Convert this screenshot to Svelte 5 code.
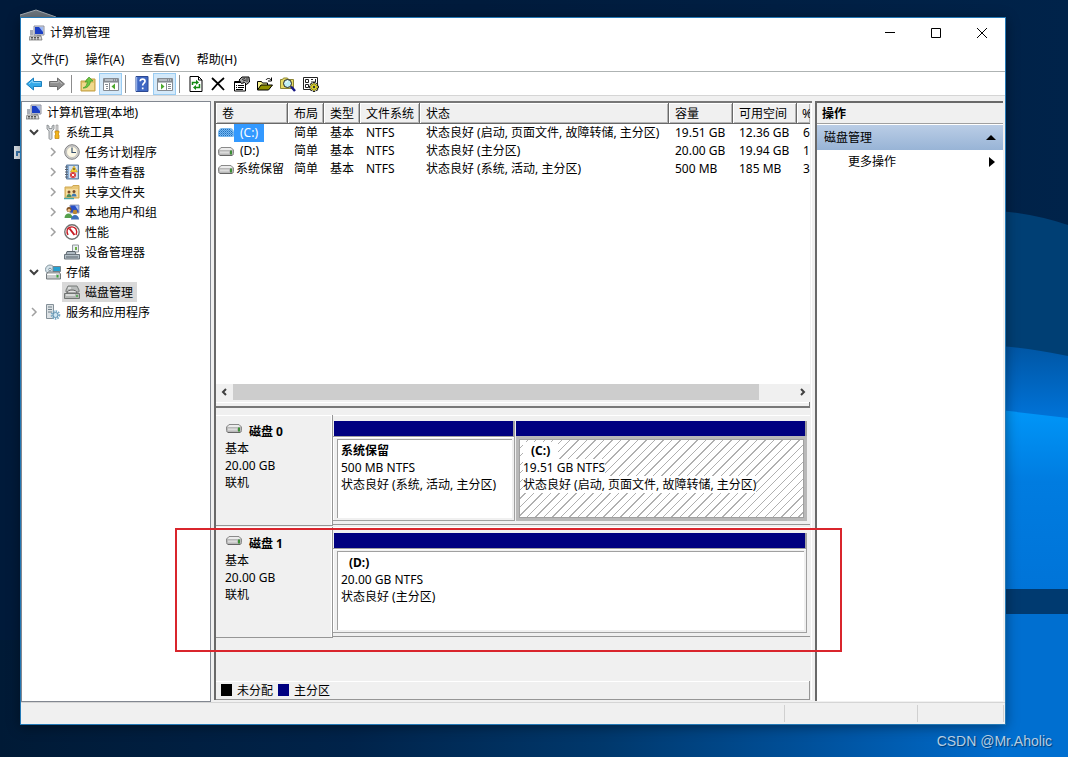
<script>
	const menus = ['文件(F)', '操作(A)', '查看(V)', '帮助(H)'];

	const tools = [
		{ icon: 'back', label: '后退' },
		{ icon: 'forward', label: '前进' },
		{ separator: true },
		{ icon: 'up', label: '上一级' },
		{ icon: 'treePane', label: '显示/隐藏控制台树', pressed: true },
		{ separator: true },
		{ icon: 'help', label: '帮助' },
		{ icon: 'actionPane', label: '显示/隐藏操作窗格', pressed: true },
		{ separator: true },
		{ icon: 'refresh', label: '刷新' },
		{ icon: 'delete', label: '删除' },
		{ icon: 'properties', label: '属性' },
		{ icon: 'open', label: '打开' },
		{ icon: 'explore', label: '浏览' },
		{ icon: 'settings', label: '设置' }
	];

	const tree = [
		{
			label: '系统工具',
			icon: 'tools',
			open: true,
			children: [
				{ label: '任务计划程序', icon: 'clock', more: true },
				{ label: '事件查看器', icon: 'events', more: true },
				{ label: '共享文件夹', icon: 'shared', more: true },
				{ label: '本地用户和组', icon: 'users', more: true },
				{ label: '性能', icon: 'performance', more: true },
				{ label: '设备管理器', icon: 'devices' }
			]
		},
		{
			label: '存储',
			icon: 'storage',
			open: true,
			children: [{ label: '磁盘管理', icon: 'disks' }]
		},
		{ label: '服务和应用程序', icon: 'services', more: true }
	];

	const columns = [
		{ label: '卷', size: 'wide' },
		{ label: '布局', size: 'narrow' },
		{ label: '类型', size: 'narrow' },
		{ label: '文件系统', size: 'medium' },
		{ label: '状态', size: 'auto' },
		{ label: '容量', size: 'amount' },
		{ label: '可用空间', size: 'amount' },
		{ label: '%', size: 'percent' }
	];

	const volumes = [
		{
			name: '(C:)',
			drive: true,
			cells: ['简单', '基本', 'NTFS', '状态良好 (启动, 页面文件, 故障转储, 主分区)', '19.51 GB', '12.36 GB', '6']
		},
		{
			name: '(D:)',
			drive: true,
			cells: ['简单', '基本', 'NTFS', '状态良好 (主分区)', '20.00 GB', '19.94 GB', '1']
		},
		{
			name: '系统保留',
			cells: ['简单', '基本', 'NTFS', '状态良好 (系统, 活动, 主分区)', '500 MB', '185 MB', '3']
		}
	];

	const disks = [
		{
			name: '磁盘 0',
			size: '20.00 GB',
			partitions: [
				{ name: '系统保留', size: '500 MB NTFS', status: '状态良好 (系统, 活动, 主分区)', share: 182 },
				{
					name: '(C:)',
					drive: true,
					size: '19.51 GB NTFS',
					status: '状态良好 (启动, 页面文件, 故障转储, 主分区)',
					share: 291,
					hatched: true
				}
			]
		},
		{
			name: '磁盘 1',
			size: '20.00 GB',
			marked: true,
			partitions: [{ name: '(D:)', drive: true, size: '20.00 GB NTFS', status: '状态良好 (主分区)', share: 1 }]
		}
	];

	let selectedNode = $state('磁盘管理');
	let selectedVolume = $state('(C:)');
</script>

{#snippet icon(name)}
	<svg class="icon" viewBox="0 0 16 16" aria-hidden="true">
		{#if name === 'computer'}
			<path d="M5 1h10v9H5z" fill="#d7d9e0" stroke="#8c90a0" />
			<path d="M6 2h8v7H6z" fill="#1b3fc4" />
			<path d="M10 2h4v5z" fill="#9db9f4" />
			<path d="M8 10h4v2H8z" fill="#9a9ca6" />
			<path d="M1 5h3v5H1z" fill="#a9adb6" />
			<path d="M1 11h11l1 4H0z" fill="#d4d4d4" stroke="#666" stroke-width=".7" />
			<path d="M2 12.5h9M2 14h9" stroke="#555" stroke-dasharray="2 1" />
		{:else if name === 'back'}
			<path d="M.5 8 7.500 2v3.500h8v5h-8V14z" fill="#35a9e8" stroke="#1c7fbd" />
			<path d="M3 8 6.700 4.600v2h7.800" fill="none" stroke="#8fd6fa" />
		{:else if name === 'forward'}
			<path d="M15.5 8 8.500 2v3.500h-8v5h8V14z" fill="#8f8f8f" stroke="#6e6e6e" />
			<path d="M1.5 6.600h7.800v-2L13 8" fill="none" stroke="#bbb" />
		{:else if name === 'up'}
			<path d="M1 5h5l1-2h8v12H1z" fill="#e2c46c" stroke="#c4a044" />
			<path d="M2 7h12v7H2z" fill="#f0d98e" />
			<path d="M3 12c3-1 4-3 4.300-6.500L5 6l4-5 4 4-2.500.2C10 9.500 7 12.500 3 12z" fill="#6cc644" stroke="#3d9a27" stroke-width=".7" />
		{:else if name === 'treePane' || name === 'actionPane'}
			<path d="M.5 2.500h15v12H.5z" fill="#fff" stroke="#858b92" />
			<path d="M1 4.500h14" stroke="#858b92" stroke-width="3" />
			<path d="M2 4h8M11 4h1M13 4h1" stroke="#e8edf2" />
			<path d="M1 6.500h14" stroke="#b7bcc2" />
			{#if name === 'treePane'}
				<path d="M6.500 7v7" stroke="#858b92" />
				<path d="M2 8.500h3M3 10.500h2M3 12.500h2" stroke="#858b92" />
				<path d="M12 7.500v6l-3.500-3z" fill="#4aa82c" />
			{:else}
				<path d="M9.500 7v7" stroke="#858b92" />
				<path d="M11 8.500h3M11 10.500h3M11 12.500h3" stroke="#858b92" />
				<path d="M4 7.500v6l3.500-3z" fill="#4aa82c" />
			{/if}
		{:else if name === 'help'}
			<path d="M2 .5h12v15H2z" fill="#3f68c4" stroke="#2b4891" />
			<path d="M2.500 1v14" stroke="#93aee6" stroke-width="1.5" />
			<path d="M6.200 5.300C6.300 2.300 11 2.400 11 5.200c0 2-2.300 2-2.300 4.300M8.700 11.500v1.700" fill="none" stroke="#fff" stroke-width="1.7" />
		{:else if name === 'refresh'}
			<path d="M2 .5h8.500L14 4v11.500H2z" fill="#fff" stroke="#000" />
			<path d="M10.500.5V4H14" fill="none" stroke="#000" />
			<path d="M4.500 9V6.500H9M11.500 8v3.500H7" fill="none" stroke="#138a13" stroke-width="1.5" />
			<path d="M8 3.800v5l3-2.300zM8 9v5l-3-2.500z" fill="#138a13" />
		{:else if name === 'delete'}
			<path d="M1 2c4 3.500 8 7.500 12 12M13 2C8 6 4 10 1 14" fill="none" stroke="#000" stroke-width="1.8" />
		{:else if name === 'properties'}
			<path d="M.5 5.500h11v9.500H.5z" fill="#fff" stroke="#000" />
			<path d="M1 6h9" stroke="#000" stroke-width="2" />
			<path d="M2 9.500h1M4 9.500h6M2 11.500h1M4 11.500h6M2 13.500h7" stroke="#000" />
			<path d="m5 4 3-3h7l.5 5-3 2.500-2-2-3 1z" fill="#a4a4a4" stroke="#000" />
			<path d="m8 3.500 3-1M9 5l3-1M13 2v4" stroke="#333" />
		{:else if name === 'open'}
			<path d="M.5 14V5.500h4l1 1.500h5v2" fill="#f5f08a" stroke="#000" />
			<path d="M.5 14 4 9h11.500l-4 5z" fill="#909000" stroke="#000" />
			<path d="M9 4c1-2 4-2 5 0M14.500 1.500V5H11" fill="none" stroke="#000" />
		{:else if name === 'explore'}
			<path d="M.5 12.500v-9h2l1-1.500h4l1 1.500h5v9z" fill="#e6da62" stroke="#8b8433" />
			<circle cx="7.500" cy="7.500" r="4" fill="#bff0f5" stroke="#222" />
			<path d="m11 10.500 4 4.500" stroke="#161684" stroke-width="2.5" />
			<path d="M6 7c0-1 1-2 2-2" stroke="#fff" fill="none" />
		{:else if name === 'settings'}
			<path d="M.5 1.500h14v12H.5z" fill="#fff" stroke="#222" />
			<path d="M2.500 3.500h3v3h-3zM2.500 8.500h3v3h-3zM8 3.500h2M8 6h5M12.500 3v3" fill="none" stroke="#222" />
			<path d="M11 6v10M6 11h10M7.500 7.500l7 7M14.500 7.500l-7 7" stroke="#222" stroke-width="2.4" />
			<path d="M11 7v8M7 11h8M8.200 8.200l5.600 5.600M13.800 8.200l-5.600 5.600" stroke="#dfd62e" stroke-width="1.4" />
			<circle cx="11" cy="11" r="2.600" fill="#dfd62e" />
			<circle cx="11" cy="11" r="1.200" fill="#333" />
		{:else if name === 'tools'}
			<path d="M2 1v4l2 2v7c0 2 3 2 3 0V7l2-2V1L7 2v2.500H4V2z" fill="#d5d8da" stroke="#7d8386" stroke-width=".8" />
			<path d="M11 1h2v6h-2z" fill="#d8d8d8" stroke="#888" stroke-width=".6" />
			<path d="M10 7h4v2l-1 1 1 1v3.500h-4V11l1-1-1-1z" fill="#f2b51c" stroke="#bd7f0c" stroke-width=".7" />
		{:else if name === 'clock'}
			<circle cx="8" cy="8" r="7.300" fill="#d0d0d0" stroke="#808080" />
			<circle cx="8" cy="8" r="5.500" fill="#fdf8e4" stroke="#a7a7a7" stroke-width=".6" />
			<path d="M8 3.500v5h4" fill="none" stroke="#38516e" stroke-width="1.2" />
		{:else if name === 'events'}
			<path d="M2.500 1h12v14h-12z" fill="#8bafd4" stroke="#5f7d9f" />
			<path d="M5 2h8.500v12H5z" fill="#d3e2f2" />
			<path d="M1 3h3M1 5.500h3M1 8h3M1 10.500h3M1 13h3" stroke="#59616d" />
			<path d="m10 2 3.500 6h-7z" fill="#ffd731" stroke="#b88911" stroke-width=".5" />
			<path d="M10 4v2.200" stroke="#222" />
			<circle cx="9" cy="11" r="3" fill="#d83a3a" />
			<path d="m7.800 9.800 2.500 2.500m0-2.500-2.500 2.500" stroke="#fff" />
		{:else if name === 'shared'}
			<path d="M1 3h7l1-1.500h6V14H1z" fill="#e9c878" stroke="#d0a851" />
			<path d="M2 5h12v8H2z" fill="#f7dea0" />
			<circle cx="5" cy="8" r="1.500" fill="#7a4b27" />
			<circle cx="10" cy="7.500" r="1.500" fill="#7a4b27" />
			<path d="M2.500 13c0-4 5-4 5 0z" fill="#4c8d59" />
			<path d="M7.500 12.500c0-4 5-4 5 0z" fill="#3e79b4" />
			<path d="M0 14.500h10" stroke="#4aa6a6" stroke-width="1.5" />
		{:else if name === 'users'}
			<path d="M6 1h9v8H6z" fill="#274fc7" stroke="#9ba1b4" />
			<path d="M11 1.500h3.500V7z" fill="#a9c3f4" />
			<circle cx="5" cy="5.500" r="2.500" fill="#81501f" />
			<circle cx="5" cy="6.300" r="1.500" fill="#eec08e" />
			<circle cx="11" cy="8" r="2.300" fill="#b98832" />
			<path d="M.5 14c0-6 8-6 8 0z" fill="#56a04c" />
			<path d="M7 15.500c0-6 8-6 8 0z" fill="#3b6fb8" />
		{:else if name === 'performance'}
			<circle cx="8" cy="8" r="7.200" fill="#fff" stroke="#707070" stroke-width="1.4" />
			<path d="M4 11C0 3 9 1 12 5c1 2 1 4 0 6" fill="none" stroke="#c71c24" stroke-width="1.4" />
			<path d="m5.500 4.500 5 6.500" stroke="#c71c24" stroke-width="2" />
		{:else if name === 'devices'}
			<path d="M8.500 1h6v7h-6z" fill="#e8eef2" stroke="#90969b" />
			<path d="M12 3v3" stroke="#6fb044" stroke-width="2" />
			<path d="M3 7.500h8l1 3H2z" fill="#aeb9c2" stroke="#59636b" />
			<path d="M.5 10.500h15V15H.5z" fill="#b4c0c8" stroke="#6b757d" />
			<path d="M2 13h12" stroke="#59636b" />
		{:else if name === 'storage'}
			<circle cx="5" cy="5.500" r="4.500" fill="#d6e3e9" stroke="#8799a3" />
			<circle cx="5" cy="5.500" r="1.300" fill="#fff" stroke="#7b909c" />
			<path d="M8 2.500h7.500v5H8z" fill="#25a0d2" stroke="#78848b" />
			<path d="M1.500 10 3 8h11l1.500 2v5h-14z" fill="#c9cdce" stroke="#72797d" />
			<path d="M12.500 11v2.500" stroke="#3aa33a" stroke-width="2" />
			<path d="M2 10.500h9" stroke="#fff" />
		{:else if name === 'disks'}
			<path d="M2 6 4 2h9l2 4v2H2z" fill="#b9bcbb" stroke="#777b79" />
			<path d="M3 9C3 5 13 5 13 9z" fill="#e4e4e4" stroke="#606060" />
			<path d="M.5 9.500h15v5H.5z" fill="#b4b7b5" stroke="#707472" />
			<path d="M2 11h9M4 4h3" stroke="#fff" />
			<path d="M13 11v2" stroke="#46a646" stroke-width="1.5" />
		{:else if name === 'services'}
			<path d="M1.500.5h7v14h-7z" fill="#dce1e4" stroke="#849098" />
			<path d="M3 3h4M3 5.500h4M3 8h4" stroke="#718089" />
			<circle cx="10.500" cy="11" r="3.800" fill="none" stroke="#78a8c4" stroke-width="2" stroke-dasharray="1.5 1" />
			<circle cx="10.500" cy="11" r="2.500" fill="#cfe5f1" stroke="#5f91b0" />
		{/if}
	</svg>
{/snippet}

{#snippet drive(selected)}
	<svg class="icon" viewBox="0 0 16 16" aria-hidden="true">
		{#if selected}
			<path d="M0 7q1-4 4-4h8q3 0 4 4v4q0 1-2 1H2q-2 0-2-1z" fill="#7ab8ee" />
			<path d="M3 4.500h10M1 6.500h14M1 8.500h14M1 10.500h14" stroke="#1d6fc0" stroke-dasharray="1 1" />
			<path d="M2 5.500h12M2 7.500h13M2 9.500h13" stroke="#3f8fd8" stroke-dasharray="1 1" />
		{:else}
			<path d="M.5 7 3 4.500h10L15.500 7v3.500q0 2-2 2h-11q-2 0-2-2z" fill="#b9b9b9" stroke="#8a8a8a" />
			<path d="M1.500 7 3.500 5h9l2 2z" fill="#ececec" />
			<path d="M2 9.500h9" stroke="#dcdcdc" stroke-width="2" />
			<path d="M13 7.500v4" stroke="#3d8f36" stroke-width="2" />
			<path d="M2 12.500h12" stroke="#666" />
		{/if}
	</svg>
{/snippet}

{#snippet node(item)}
	<li>
		<div class="node">
			<span class="chevron">
				{#if item.open || item.more}
					<svg viewBox="0 0 12 12" class:open={item.open} aria-hidden="true">
						<path d={item.open ? 'M2 4l4 4 4-4' : 'M4 2l4 4-4 4'} />
					</svg>
				{/if}
			</span>
			<button
				class="node-label"
				class:selected={selectedNode === item.label}
				onclick={() => (selectedNode = item.label)}
			>
				{@render icon(item.icon)}
				<span>{item.label}</span>
			</button>
		</div>
		{#if item.children}
			<ul class="nested">
				{#each item.children as child}
					{@render node(child)}
				{/each}
			</ul>
		{/if}
	</li>
{/snippet}

<div class="desktop">
	<svg class="wallpaper" viewBox="0 0 1068 757" preserveAspectRatio="none" aria-hidden="true">
		<defs>
			<linearGradient id="night" x1="0" y1="0" x2="1" y2="0">
				<stop offset="0" stop-color="#001a3a" />
				<stop offset=".45" stop-color="#001b3c" />
				<stop offset="1" stop-color="#00234a" />
			</linearGradient>
			<linearGradient id="floor" x1="0" y1="0" x2="1" y2="0">
				<stop offset="0" stop-color="#001a36" />
				<stop offset=".35" stop-color="#00234a" />
				<stop offset=".6" stop-color="#00386c" />
				<stop offset=".8" stop-color="#00509a" />
				<stop offset="1" stop-color="#006ccd" />
			</linearGradient>
			<linearGradient id="beam" x1="0" y1="0" x2="0" y2="1">
				<stop offset="0" stop-color="#0056a4" />
				<stop offset="1" stop-color="#0074da" />
			</linearGradient>
			<linearGradient id="pane" x1="0" y1="0" x2="0" y2="1">
				<stop offset="0" stop-color="#0096f8" />
				<stop offset=".4" stop-color="#007ce0" />
				<stop offset="1" stop-color="#0074d8" />
			</linearGradient>
		</defs>
		<path d="M0 0h1068v757H0z" fill="url(#night)" />
		<path d="M0 640h1006v117H0z" fill="url(#floor)" />
		<path d="M1000 211q35 3 68 14v140h-68z" fill="#003f74" />
		<path d="M1000 346q30 2 68 10v64h-68z" fill="url(#beam)" />
		<path d="M1000 410l68 8v171h-68z" fill="url(#pane)" />
		<path d="M1000 589h68v25h-68z" fill="#003a70" />
		<path d="M1000 614h68v143h-68z" fill="#006fd0" />
		<path d="M20 15l16-5 20 7v2H20z" fill="#6e7780" />
		<path d="M20 15l16-5 20 7" fill="none" stroke="#a9b0b6" />
		<path d="M14 146h8v13h-8z" fill="#dfe6ec" />
		<path d="M17 156v-4h4" fill="none" stroke="#3977ae" stroke-width="2" />
	</svg>

	<main class="window">
		<header class="titlebar">
			{@render icon('computer')}
			<h1>计算机管理</h1>
			<button class="caption" aria-label="最小化">
				<svg viewBox="0 0 12 12"><path d="M1 5.500h10" /></svg>
			</button>
			<button class="caption" aria-label="最大化">
				<svg viewBox="0 0 12 12"><path d="M1.500 1.500h9v9h-9z" /></svg>
			</button>
			<button class="caption" aria-label="关闭">
				<svg viewBox="0 0 12 12"><path d="m1 1 10 10M11 1 1 11" /></svg>
			</button>
		</header>

		<nav class="menubar">
			{#each menus as menu}
				<button>{menu}</button>
			{/each}
		</nav>

		<div class="toolbar">
			{#each tools as tool}
				{#if tool.separator}
					<span class="separator"></span>
				{:else}
					<button class:pressed={tool.pressed} aria-label={tool.label}>
						{@render icon(tool.icon)}
					</button>
				{/if}
			{/each}
		</div>

		<div class="panes">
			<aside class="tree">
				<button class="node-label" onclick={() => (selectedNode = '')}>
					{@render icon('computer')}
					<span>计算机管理(本地)</span>
				</button>
				<ul>
					{#each tree as item}
						{@render node(item)}
					{/each}
				</ul>
			</aside>

			<section class="content">
				<div class="volumes">
					<table>
						<thead>
							<tr>
								{#each columns as column}
									<th class={column.size}>{column.label}</th>
								{/each}
							</tr>
						</thead>
						<tbody>
							{#each volumes as volume}
								<tr onclick={() => (selectedVolume = volume.name)}>
									<td class="volume">
										<div>
											{@render drive(selectedVolume === volume.name)}
											<span class:drive={volume.drive} class:selected={selectedVolume === volume.name}>
												{volume.name}
											</span>
										</div>
									</td>
									{#each volume.cells as cell}
										<td>{cell}</td>
									{/each}
								</tr>
							{/each}
						</tbody>
					</table>
				</div>

				<div class="scrollbar">
					<button aria-label="向左滚动">
						<svg viewBox="0 0 12 12"><path d="M7 3 4 6l3 3" /></svg>
					</button>
					<div class="track"><div class="thumb"></div></div>
					<button aria-label="向右滚动">
						<svg viewBox="0 0 12 12"><path d="m5 3 3 3-3 3" /></svg>
					</button>
				</div>
				<div class="splitter"></div>

				<div class="disks">
					{#each disks as disk}
						<div class="disk">
							<div class="disk-info">
								<div class="disk-name">
									{@render drive(false)}
									<strong>{disk.name}</strong>
								</div>
								<p>基本</p>
								<p>{disk.size}</p>
								<p>联机</p>
							</div>
							<div class="partitions">
								{#each disk.partitions as partition}
									<div class="partition" class:hatched={partition.hatched} style="flex-grow: {partition.share}">
										<div class="bar"></div>
										<div class="frame">
											<div class="details">
												<strong class:drive={partition.drive}>{partition.name}</strong>
												<span>{partition.size}</span>
												<span>{partition.status}</span>
											</div>
										</div>
									</div>
								{/each}
							</div>
							{#if disk.marked}
								<div class="marker"></div>
							{/if}
						</div>
					{/each}
				</div>

				<div class="legend">
					<span class="swatch"></span>
					<span>未分配</span>
					<span class="swatch primary"></span>
					<span>主分区</span>
				</div>
			</section>

			<aside class="actions">
				<h2>操作</h2>
				<button class="group">
					<span>磁盘管理</span>
					<svg viewBox="0 0 10 6"><path d="M5 0l5 5H0z" /></svg>
				</button>
				<button class="action">
					<span>更多操作</span>
					<svg viewBox="0 0 6 10"><path d="M0 0l6 5-6 5z" /></svg>
				</button>
			</aside>
		</div>

		<footer class="statusbar">
			<span></span>
			<span></span>
			<span></span>
		</footer>
	</main>

	<p class="watermark">CSDN @Mr.Aholic</p>
</div>

<style>
	:global(body) {
		margin: 0;
		background: #001a3a;
	}

	.desktop {
		position: relative;
		display: flex;
		flex-direction: column;
		box-sizing: border-box;
		min-height: 100vh;
		padding-top: 17px;
		font-family: 'Noto Sans', 'Noto Sans CJK SC', sans-serif;
		font-size: 12px;
		line-height: 17px;
		color: #000;
	}

	.wallpaper {
		position: absolute;
		inset: 0;
		width: 100%;
		height: 100%;
	}

	h1,
	h2,
	p,
	ul {
		margin: 0;
		padding: 0;
		font-size: 12px;
		list-style: none;
	}

	button {
		margin: 0;
		padding: 0;
		border: 0;
		background: none;
		font: inherit;
		color: inherit;
		white-space: nowrap;
	}

	svg {
		display: block;
		flex: none;
	}

	.icon {
		width: 16px;
		height: 16px;
	}

	.window {
		position: relative;
		display: flex;
		flex-direction: column;
		flex: 1;
		margin: 0 62px 0 20px;
		border: 1px solid #2378b5;
		background: #fff;
		box-shadow: 0 2px 12px rgba(0, 0, 0, 0.4);
	}

	.titlebar {
		display: flex;
		align-items: center;
		height: 29px;
		padding-left: 8px;
	}

	h1 {
		flex: 1;
		margin-left: 5px;
		font-weight: normal;
	}

	.caption {
		display: flex;
		align-items: center;
		justify-content: center;
		width: 46px;
		height: 29px;
	}

	.caption svg {
		width: 12px;
		height: 12px;
		fill: none;
		stroke: #000;
	}

	.menubar {
		display: flex;
		gap: 1px;
		height: 24px;
		padding-left: 2px;
		border-bottom: 1px solid #aeb3b3;
	}

	.menubar button {
		padding: 0 8px;
	}

	.toolbar {
		display: flex;
		align-items: center;
		height: 22px;
		padding: 1px 0 0 1px;
		border-bottom: 1px solid #d5d5d5;
	}

	.toolbar button {
		display: flex;
		align-items: center;
		justify-content: center;
		width: 23px;
		height: 22px;
	}

	.toolbar .pressed {
		box-shadow: inset 0 0 0 1px #9accf2;
		background: #d3e9fa;
	}

	.separator {
		width: 1px;
		height: 18px;
		margin: 0 4px 0 3px;
		background: #8c8c8c;
	}

	.panes {
		display: grid;
		grid-template-columns: 190px minmax(0, 1fr) 188px;
		gap: 3px;
		flex: 1;
		padding: 5px 2px 0 0;
		background: #f0f0f0;
	}

	.tree {
		padding-left: 2px;
		border: 1px solid #828790;
		background: #fff;
	}

	.nested {
		padding-left: 19px;
	}

	.node {
		display: flex;
	}

	.chevron {
		width: 19px;
		padding: 4px 0 0 4px;
		box-sizing: border-box;
	}

	.chevron svg {
		width: 12px;
		height: 12px;
		fill: none;
		stroke: #a0a0a0;
		stroke-width: 1.5;
	}

	.chevron .open {
		stroke: #404040;
		stroke-width: 2;
	}

	.node-label {
		display: flex;
		align-items: center;
		gap: 5px;
		height: 20px;
		padding: 0 4px 0 2px;
	}

	.node-label.selected {
		background: #d9d9d9;
	}

	.content {
		display: flex;
		flex-direction: column;
		margin-bottom: 2px;
		border: solid #696969;
		border-width: 2px 0 0 2px;
		border-top-color: #777;
		padding-right: 2px;
		box-shadow: inset -1px 0 #fff;
	}

	.volumes {
		flex: 1;
		overflow: hidden;
		background: #fff;
	}

	table {
		width: 100%;
		border-collapse: separate;
		border-spacing: 0;
		table-layout: fixed;
	}

	th {
		box-sizing: border-box;
		height: 21px;
		padding: 0 0 0 6px;
		border: solid #696969;
		border-width: 0 1px 1px 0;
		box-shadow: inset 1px 1px #fff, inset -1px -1px #b4b4b4;
		background: #f0f0f0;
		font-weight: normal;
		text-align: left;
		white-space: nowrap;
	}

	th.wide {
		width: 72px;
	}

	th.narrow {
		width: 36px;
	}

	th.medium {
		width: 60px;
	}

	th.amount {
		width: 64px;
	}

	th.percent {
		width: 13px;
		padding-left: 5px;
		border-right: 0;
		overflow: hidden;
	}

	td {
		height: 18px;
		padding: 0 0 0 6px;
		line-height: 18px;
		white-space: nowrap;
	}

	.volume {
		padding-left: 2px;
	}

	.volume div {
		display: flex;
		align-items: center;
	}

	.volume span {
		padding: 0 2px;
	}

	.volume .drive {
		padding: 0 6px;
	}

	.volume .selected {
		background: #3399ff;
		color: #fff;
	}

	.scrollbar {
		display: flex;
		align-items: center;
		height: 16px;
		background: #f0f0f0;
	}

	.scrollbar button {
		display: flex;
		justify-content: center;
		width: 17px;
	}

	.scrollbar svg {
		width: 12px;
		height: 12px;
		fill: none;
		stroke: #404040;
		stroke-width: 2;
	}

	.track {
		flex: 1;
	}

	.thumb {
		width: 94%;
		height: 16px;
		background: #cdcdcd;
	}

	.splitter {
		height: 4px;
		margin-top: 2px;
		border: solid #777;
		border-width: 0 1px 2px 0;
		box-shadow: inset 0 1px #fff;
	}

	.disks {
		padding: 7px 0 42px;
	}

	.disk {
		position: relative;
		display: flex;
		height: 112px;
	}

	.disk-info {
		box-sizing: border-box;
		width: 117px;
		height: 111px;
		padding: 7px 0 0 9px;
		border: solid #969696;
		border-width: 0 1px 1px 0;
		box-shadow: inset 0 1px #fff, inset -1px 0 #fff;
	}

	.disk-name {
		display: flex;
		gap: 7px;
		padding-left: 1px;
	}

	.disk-name .icon {
		margin-top: -2px;
	}

	.disk-name strong {
		padding-top: 1px;
	}

	.partitions {
		display: flex;
		gap: 1px;
		flex: 1;
		box-sizing: border-box;
		height: 110px;
		padding: 6px 3px 0 0;
		border-bottom: 1px solid #969696;
		box-shadow: inset 0 1px #fff;
	}

	.partition {
		flex-basis: 0;
		min-width: 0;
	}

	.bar {
		height: 15px;
		border: solid #a0a0a0;
		border-width: 0 2px 0 0;
		border-left: 1px solid #f0f0f0;
		background: #000080;
	}

	.frame {
		box-sizing: border-box;
		height: 85px;
		padding: 2px;
		border: solid #a0a0a0;
		border-width: 1px 1px 1px 0;
		box-shadow: inset 1px 1px #fff;
	}

	.details {
		display: flex;
		flex-direction: column;
		align-items: flex-start;
		box-sizing: border-box;
		height: 79px;
		margin-left: 2px;
		padding: 2px 0 0 3px;
		border: solid #a0a0a0;
		border-width: 1px 0 0 1px;
		background: #fff;
		white-space: nowrap;
	}

	.details strong.drive {
		padding: 0 8px;
	}

	.hatched .bar {
		border-left: 0;
	}

	.hatched .frame {
		border-color: #b8b8b8;
		background: #b8b8b8;
		box-shadow: none;
	}

	.hatched .details {
		margin-left: 1px;
		border-width: 1px;
		background: repeating-linear-gradient(135deg, #fff 0 5px, #b0b0b0 5px 6px);
	}

	.hatched .details > * {
		background: #fff;
	}

	.marker {
		position: absolute;
		inset: 1px -32px -13px -41px;
		z-index: 1;
		border: 2px solid #d9252c;
		pointer-events: none;
	}

	.legend {
		display: flex;
		align-items: center;
		gap: 5px;
		height: 18px;
		padding-left: 5px;
		border: solid #969696;
		border-width: 0 1px 1px 0;
		box-shadow: inset 0 1px #fff;
	}

	.swatch {
		width: 11px;
		height: 12px;
		background: #000;
	}

	.swatch.primary {
		background: #000080;
	}

	.actions {
		display: flex;
		flex-direction: column;
		margin-bottom: 1px;
		border: solid #696969;
		border-width: 2px 0 0 2px;
		background: #fff;
	}

	h2 {
		height: 18px;
		padding: 2px 5px 0;
		border-bottom: 1px solid #a0a0a0;
		background: #f0f0f0;
	}

	.group,
	.action {
		display: flex;
		align-items: center;
		justify-content: space-between;
		margin-top: 1px;
		height: 25px;
		padding: 0 7px;
	}

	.group {
		background: linear-gradient(#bacde6, #98b4d6);
	}

	.group svg {
		width: 10px;
		height: 6px;
	}

	.action {
		margin-top: 0;
		height: 23px;
		padding: 0 8px 0 31px;
	}

	.action svg {
		width: 6px;
		height: 10px;
	}

	.statusbar {
		display: flex;
		height: 21px;
		padding-right: 1px;
		border-top: 1px solid #d5d5d5;
		background: #f0f0f0;
	}

	.statusbar span {
		width: 132px;
		margin: 2px 0;
		border-right: 1px solid #d0d0d0;
	}

	.statusbar span:first-child {
		flex: 1;
	}

	.statusbar span:last-child {
		width: 85px;
	}

	.watermark {
		position: relative;
		height: 32px;
		padding-right: 16px;
		font-family: 'Liberation Sans', sans-serif;
		font-size: 14px;
		line-height: 32px;
		text-align: right;
		color: #b4cde3;
		text-shadow: 1px 1px 1px #003a70;
	}
</style>
